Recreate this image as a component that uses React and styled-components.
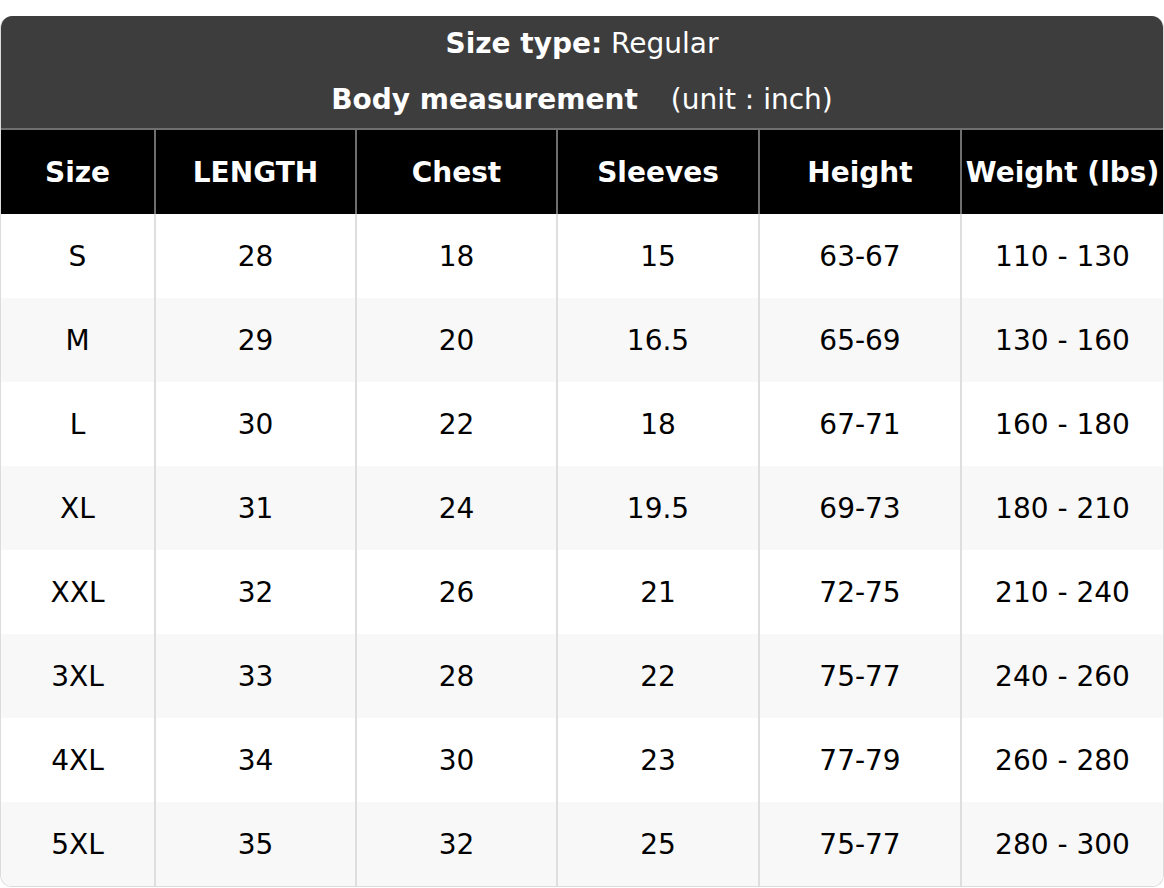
import React from 'react';
import styled, { createGlobalStyle } from 'styled-components';

const GlobalStyle = createGlobalStyle`
  html, body {
    margin: 0;
    padding: 0;
    background: #fff;
  }
  body {
    font-family: "DejaVu Sans", Verdana, sans-serif;
  }
`;

const Page = styled.div`
  padding-top: 16px;
`;

const Chart = styled.div`
  border: 1px solid #dcdcdc;
  border-top: none;
  border-radius: 12px;
  overflow: hidden;
  background: #fff;
`;

const Caption = styled.div`
  background: #3d3d3d;
  color: #fff;
  text-align: center;
  border-bottom: 2px solid #707070;
`;

const CaptionLine = styled.div`
  height: 56px;
  line-height: 56px;
  font-size: 28px;
`;

const Unit = styled.span`
  margin-left: 33px;
`;

const Table = styled.table`
  width: 100%;
  border-collapse: collapse;
  table-layout: fixed;
`;

const HeadCell = styled.th`
  background: #000;
  color: #fff;
  font-size: 28px;
  font-weight: bold;
  height: 84px;
  padding: 0;
  text-align: center;
  white-space: nowrap;
  border-left: 2px solid #6e6e6e;
  &:first-child {
    border-left: none;
  }
`;

const Row = styled.tr`
  background: ${props => (props.striped ? '#f8f8f8' : '#fff')};
`;

const Cell = styled.td`
  height: 84px;
  padding: 0;
  font-size: 28px;
  color: #000;
  text-align: center;
  border-left: 2px solid #dedede;
  &:first-child {
    border-left: none;
  }
`;

const columns = [
  { label: 'Size', width: 154 },
  { label: 'LENGTH', width: 201 },
  { label: 'Chest', width: 201 },
  { label: 'Sleeves', width: 202 },
  { label: 'Height', width: 202 },
  { label: 'Weight (lbs)', width: 202 },
];

const sizes = [
  ['S', '28', '18', '15', '63-67', '110 - 130'],
  ['M', '29', '20', '16.5', '65-69', '130 - 160'],
  ['L', '30', '22', '18', '67-71', '160 - 180'],
  ['XL', '31', '24', '19.5', '69-73', '180 - 210'],
  ['XXL', '32', '26', '21', '72-75', '210 - 240'],
  ['3XL', '33', '28', '22', '75-77', '240 - 260'],
  ['4XL', '34', '30', '23', '77-79', '260 - 280'],
  ['5XL', '35', '32', '25', '75-77', '280 - 300'],
];

const App = () => {
  return (
    <Page>
      <GlobalStyle />
      <Chart>
        <Caption>
          <CaptionLine>
            <strong>Size type:</strong> Regular
          </CaptionLine>
          <CaptionLine>
            <strong>Body measurement</strong>
            <Unit>(unit : inch)</Unit>
          </CaptionLine>
        </Caption>
        <Table>
          <colgroup>
            {columns.map(col => (
              <col key={col.label} style={{ width: col.width }} />
            ))}
          </colgroup>
          <thead>
            <tr>
              {columns.map(col => (
                <HeadCell key={col.label}>{col.label}</HeadCell>
              ))}
            </tr>
          </thead>
          <tbody>
            {sizes.map((row, i) => (
              <Row key={row[0]} striped={i % 2 === 1}>
                {row.map((value, j) => (
                  <Cell key={j}>{value}</Cell>
                ))}
              </Row>
            ))}
          </tbody>
        </Table>
      </Chart>
    </Page>
  );
};

export default App;
